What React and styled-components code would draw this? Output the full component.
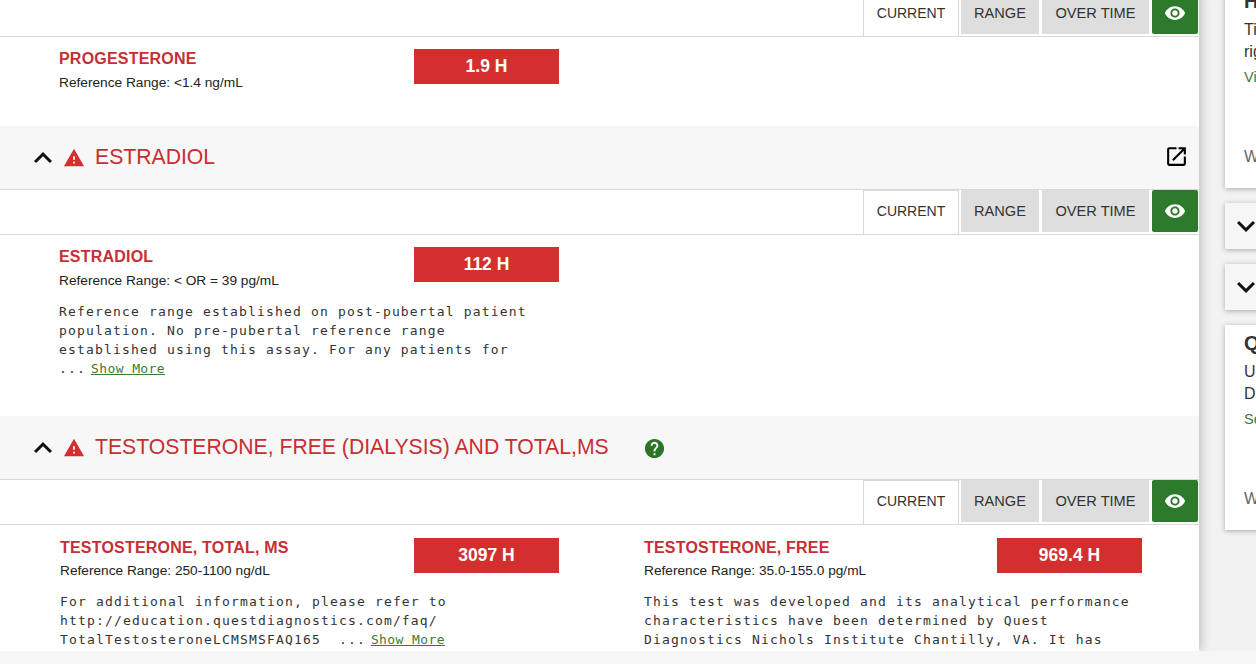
import React from "react";
import styled, { createGlobalStyle } from "styled-components";
import {
  MdExpandLess,
  MdExpandMore,
  MdHelp,
  MdOpenInNew,
  MdVisibility,
  MdWarning,
} from "react-icons/md";

const GlobalStyle = createGlobalStyle`
  html, body {
    margin: 0;
    height: 100%;
    overflow: hidden;
    background: #f6f6f6;
  }
`;

const Page = styled.div`
  height: 651px;
  display: flex;
  overflow: hidden;
  background: #f2f2f2;
  font-family: "Liberation Sans", Arial, sans-serif;
`;

const Main = styled.main`
  width: 1199px;
  flex-shrink: 0;
  margin-top: -8px;
  background: #fff;
  box-shadow: 2px 0 10px rgba(0, 0, 0, 0.22);
`;

const SectionHeader = styled.header`
  height: 64px;
  box-sizing: border-box;
  display: flex;
  align-items: center;
  padding: 0 10px 2px 25px;
  background: #f7f7f7;
  border-bottom: 1px solid #d8d8d8;
`;

const Chevron = styled(MdExpandLess)`
  font-size: 36px;
  color: #111;
  margin-top: 2px;
  flex-shrink: 0;
`;

const Warn = styled(MdWarning)`
  font-size: 22px;
  color: #d32f2f;
  margin: 2px 10px 0 2px;
  flex-shrink: 0;
`;

const SectionTitle = styled.h2`
  margin: 0;
  font-size: 21.2px;
  font-weight: 400;
  color: #c62f33;
`;

const Help = styled(MdHelp)`
  font-size: 23px;
  color: #2e7428;
  margin: 3px 0 0 34px;
`;

const External = styled(MdOpenInNew)`
  font-size: 25px;
  color: #000;
  margin-left: auto;
`;

const Toolbar = styled.div`
  height: 45px;
  box-sizing: border-box;
  display: flex;
  justify-content: flex-end;
  gap: 3px;
  padding: 0 1px 2px 0;
  border-bottom: 1px solid #d8d8d8;
`;

const Tab = styled.div`
  width: ${(p) => p.$width}px;
  box-sizing: border-box;
  display: flex;
  align-items: center;
  justify-content: center;
  margin-right: ${(p) => (p.$active ? "-1px" : "0")};
  margin-bottom: ${(p) => (p.$active ? "-2px" : "0")};
  padding-bottom: ${(p) => (p.$active ? "4px" : "0")};
  font-size: ${(p) => (p.$active ? "14px" : "14.6px")};
  color: #333;
  background: ${(p) => (p.$active ? "#fff" : "#dedede")};
  border: ${(p) => (p.$active ? "1px solid #d8d8d8" : "0")};
  border-bottom: 0;
`;

const EyeButton = styled.div`
  width: 46px;
  display: flex;
  align-items: center;
  justify-content: center;
  background: #2e7a2c;
  border-radius: 2px;
  color: #fff;
  font-size: 22px;
`;

const Results = styled.div`
  display: grid;
  grid-template-columns: 584px 1fr;
  padding: ${(p) => p.$top}px 0 0 ${(p) => p.$left}px;
  height: ${(p) => p.$height}px;
  box-sizing: border-box;
`;

const Result = styled.div`
  width: ${(p) => p.$width}px;
`;

const ResultHead = styled.div`
  display: flex;
  justify-content: space-between;
  height: 46px;
`;

const Name = styled.div`
  font-size: 16px;
  font-weight: 700;
  letter-spacing: 0.2px;
  color: #c62f33;
  line-height: 19px;
`;

const Range = styled.div`
  font-size: 13.7px;
  color: #222;
  margin-top: ${(p) => (p.$tight ? "5px" : "6px")};
  line-height: 18px;
`;

const Badge = styled.div`
  width: 145px;
  height: 35px;
  display: flex;
  align-items: center;
  justify-content: center;
  background: #d32f2f;
  color: #fff;
  font-size: 17.5px;
  font-weight: 700;
`;

const Note = styled.p`
  margin: ${(p) => (p.$tight ? "8px" : "9px")} 0 0;
  font-family: "DejaVu Sans Mono", monospace;
  font-size: 13px;
  letter-spacing: 1.17px;
  line-height: 19px;
  color: #333;
  white-space: pre;
`;

const ShowMore = styled.a`
  margin-left: 5px;
  letter-spacing: 0.4px;
  color: #3c7a3a;
  text-decoration: underline;
`;

const Sidebar = styled.aside`
  margin: -17px 0 0 26px;
  width: 300px;
  flex-shrink: 0;
  display: flex;
  flex-direction: column;
  gap: 15px;
  color: #333;
`;

const Card = styled.section`
  height: 205px;
  box-sizing: border-box;
  padding: 7px 0 0 19px;
  background: #fff;
  box-shadow: 0 1px 5px rgba(0, 0, 0, 0.3);
  flex-shrink: 0;
`;

const CardTitle = styled.h3`
  margin: 0;
  font-size: 20px;
  font-weight: 700;
  line-height: 22px;
`;

const CardBody = styled.div`
  margin-top: 7px;
  font-size: 16px;
  line-height: 21.5px;
`;

const CardLink = styled.div`
  margin-top: 6px;
  font-size: 14.5px;
  line-height: 18px;
  color: #3c7a3a;
`;

const CardFoot = styled.div`
  margin-top: 60px;
  font-size: 16px;
  line-height: 22px;
  color: #666;
`;

const Collapsed = styled.section`
  height: 46px;
  display: flex;
  align-items: center;
  padding-left: 3px;
  background: #f6f6f6;
  box-shadow: 0 1px 5px rgba(0, 0, 0, 0.3);
  flex-shrink: 0;
  font-size: 36px;
  color: #111;
`;

function Tabs() {
  return (
    <Toolbar>
      <Tab $active $width={96}>
        CURRENT
      </Tab>
      <Tab $width={78}>RANGE</Tab>
      <Tab $width={107}>OVER TIME</Tab>
      <EyeButton>
        <MdVisibility />
      </EyeButton>
    </Toolbar>
  );
}

export default function App() {
  return (
    <Page>
      <GlobalStyle />
      <Main>
        <Tabs />
        <Results $top={12} $left={59} $height={89}>
          <Result $width={500}>
            <ResultHead>
              <div>
                <Name>PROGESTERONE</Name>
                <Range>Reference Range: &lt;1.4 ng/mL</Range>
              </div>
              <Badge>1.9 H</Badge>
            </ResultHead>
          </Result>
        </Results>

        <SectionHeader>
          <Chevron />
          <Warn />
          <SectionTitle>ESTRADIOL</SectionTitle>
          <External />
        </SectionHeader>
        <Tabs />
        <Results $top={12} $left={59} $height={181}>
          <Result $width={500}>
            <ResultHead>
              <div>
                <Name>ESTRADIOL</Name>
                <Range>Reference Range: &lt; OR = 39 pg/mL</Range>
              </div>
              <Badge>112 H</Badge>
            </ResultHead>
            <Note>
              {"Reference range established on post-pubertal patient\npopulation. No pre-pubertal reference range\nestablished using this assay. For any patients for\n..."}
              <ShowMore>Show More</ShowMore>
            </Note>
          </Result>
        </Results>

        <SectionHeader>
          <Chevron />
          <Warn />
          <SectionTitle>TESTOSTERONE, FREE (DIALYSIS) AND TOTAL,MS</SectionTitle>
          <Help />
        </SectionHeader>
        <Tabs />
        <Results $top={13} $left={60} $height={140}>
          <Result $width={499}>
            <ResultHead>
              <div>
                <Name>TESTOSTERONE, TOTAL, MS</Name>
                <Range $tight>Reference Range: 250-1100 ng/dL</Range>
              </div>
              <Badge>3097 H</Badge>
            </ResultHead>
            <Note $tight>
              {"For additional information, please refer to\nhttp://education.questdiagnostics.com/faq/\nTotalTestosteroneLCMSMSFAQ165  ..."}
              <ShowMore>Show More</ShowMore>
            </Note>
          </Result>
          <Result $width={498}>
            <ResultHead>
              <div>
                <Name>TESTOSTERONE, FREE</Name>
                <Range $tight>Reference Range: 35.0-155.0 pg/mL</Range>
              </div>
              <Badge>969.4 H</Badge>
            </ResultHead>
            <Note $tight>
              {"This test was developed and its analytical performance\ncharacteristics have been determined by Quest\nDiagnostics Nichols Institute Chantilly, VA. It has"}
            </Note>
          </Result>
        </Results>
      </Main>

      <Sidebar>
        <Card>
          <CardTitle>H</CardTitle>
          <CardBody>
            Ti
            <br />
            rig
          </CardBody>
          <CardLink>Vi</CardLink>
          <CardFoot>W</CardFoot>
        </Card>
        <Collapsed>
          <MdExpandMore />
        </Collapsed>
        <Collapsed>
          <MdExpandMore />
        </Collapsed>
        <Card>
          <CardTitle>Q</CardTitle>
          <CardBody>
            U
            <br />D
          </CardBody>
          <CardLink>Se</CardLink>
          <CardFoot>W</CardFoot>
        </Card>
      </Sidebar>
    </Page>
  );
}
